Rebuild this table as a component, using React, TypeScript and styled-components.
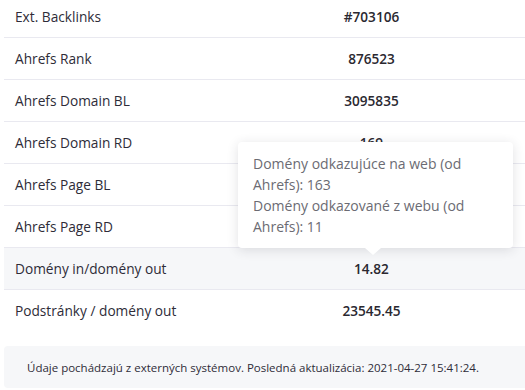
import React from "react";
import styled, { createGlobalStyle } from "styled-components";

const Global = createGlobalStyle`
  html, body { margin: 0; padding: 0; background: #ffffff; }
  body { font-family: "Open Sans", "Noto Sans", sans-serif; overflow: hidden; }
`;

const Page = styled.div`
  position: relative;
  width: 525px;
  height: 390px;
  overflow: hidden;
  padding-left: 4px;
  box-sizing: border-box;
`;

const Table = styled.div`
  margin-top: -4px;
  display: flex;
  flex-direction: column;
`;

const Row = styled.div<{ $hover?: boolean; $last?: boolean }>`
  display: grid;
  grid-template-columns: 214px 1fr;
  align-items: center;
  height: 42px;
  box-sizing: border-box;
  border-bottom: 1px solid ${(p) => (p.$last ? "transparent" : "#e9e9f0")};
  background: ${(p) => (p.$hover ? "#f6f7f9" : "transparent")};
`;

const Label = styled.div`
  padding-left: 11px;
  font-size: 13.7px;
  color: #2e2c38;
`;

const Value = styled.div`
  text-align: center;
  font-size: 13.6px;
  font-weight: 600;
  color: #2a2830;
`;

const Footer = styled.div`
  margin-top: 14px;
  height: 42px;
  background: #f6f7f9;
  border-radius: 4px 0 0 4px;
  display: flex;
  align-items: center;
  padding-left: 23px;
  font-size: 11.5px;
  color: #2e2c38;
`;

const Tooltip = styled.div`
  position: absolute;
  left: 238px;
  top: 142px;
  width: 275px;
  box-sizing: border-box;
  padding: 11px 15px;
  background: #ffffff;
  border-radius: 4px;
  box-shadow: 0 2px 12px rgba(40, 40, 60, 0.14);
  font-size: 14px;
  line-height: 21px;
  color: #6b6b73;

  &::after {
    content: "";
    position: absolute;
    left: 127px;
    bottom: -7px;
    width: 0;
    height: 0;
    border-left: 8px solid transparent;
    border-right: 8px solid transparent;
    border-top: 7px solid #ffffff;
  }
`;

const rows: { label: string; value: string; hover?: boolean }[] = [
  { label: "Ext. Backlinks", value: "#703106" },
  { label: "Ahrefs Rank", value: "876523" },
  { label: "Ahrefs Domain BL", value: "3095835" },
  { label: "Ahrefs Domain RD", value: "169" },
  { label: "Ahrefs Page BL", value: "" },
  { label: "Ahrefs Page RD", value: "" },
  { label: "Domény in/domény out", value: "14.82", hover: true },
  { label: "Podstránky / domény out", value: "23545.45" },
];

export default function App() {
  return (
    <>
      <Global />
      <Page>
        <Table>
          {rows.map((r, i) => (
            <Row key={r.label} $hover={r.hover} $last={i === rows.length - 1}>
              <Label>{r.label}</Label>
              <Value>{r.value}</Value>
            </Row>
          ))}
        </Table>
        <Footer>
          Údaje pochádzajú z externých systémov. Posledná aktualizácia: 2021-04-27 15:41:24.
        </Footer>
        <Tooltip>
          Domény odkazujúce na web (od Ahrefs): 163
          <br />
          Domény odkazované z webu (od Ahrefs): 11
        </Tooltip>
      </Page>
    </>
  );
}
